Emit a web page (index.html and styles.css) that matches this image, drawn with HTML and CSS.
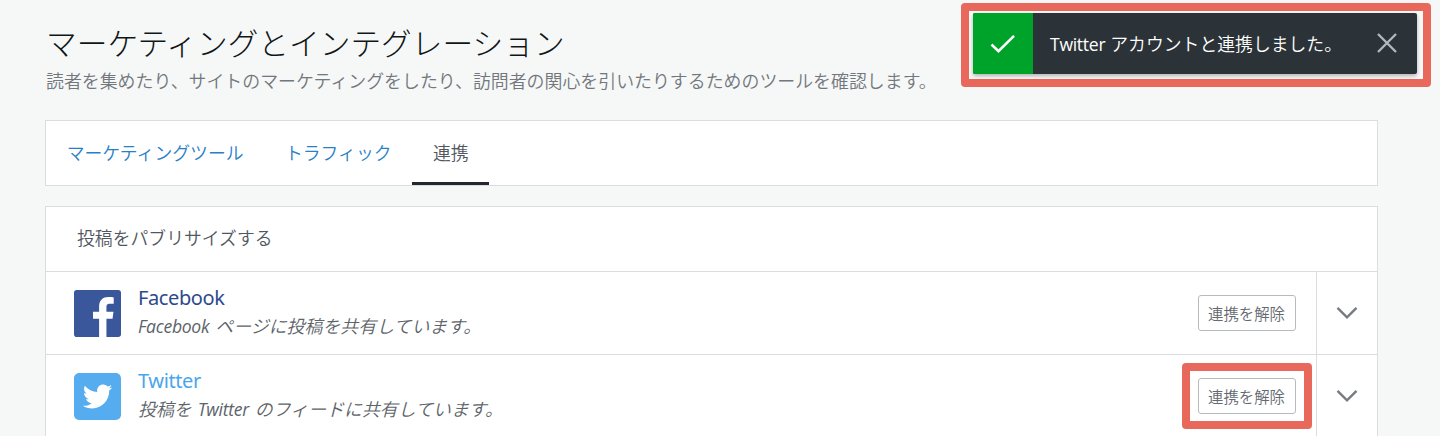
FILE: index.html
```
<!DOCTYPE html>
<html lang="ja">
<head>
  <meta charset="UTF-8" />
  <meta name="viewport" content="width=device-width, initial-scale=1.0"/>
  <title>マーケティングとインテグレーション</title>
  <link rel="stylesheet" href="styles.css">
</head>
<body>

  <main class="content">
    <header class="page-header">
      <h1>マーケティングとインテグレーション</h1>
      <p>読者を集めたり、サイトのマーケティングをしたり、訪問者の関心を引いたりするためのツールを確認します。</p>
    </header>

    <nav class="tabs">
      <a href="#">マーケティングツール</a>
      <a href="#">トラフィック</a>
      <a href="#" class="active">連携</a>
    </nav>

    <section class="services">
      <h2>投稿をパブリサイズする</h2>

      <div class="service">
        <svg class="logo facebook" viewBox="3 3 18 18"><path d="M20.007 3H3.993C3.445 3 3 3.445 3 3.993v16.013c0 .55.445.994.993.994h8.62v-6.97H10.27V11.31h2.346V9.31c0-2.325 1.42-3.59 3.494-3.59.993 0 1.847.073 2.096.106v2.43h-1.438c-1.128 0-1.346.537-1.346 1.324v1.734h2.69l-.35 2.717h-2.34V21h4.587c.548 0 .993-.445.993-.993V3.993c0-.548-.445-.993-.993-.993z"/></svg>
        <div class="info">
          <h3 class="facebook">Facebook</h3>
          <p><span class="latin">Facebook</span> ページに投稿を共有しています。</p>
        </div>
        <div class="action">
          <button type="button">連携を解除</button>
        </div>
        <div class="toggle">
          <svg viewBox="0 0 22 14"><path d="M1.5 1.8 11 11.3l9.5-9.5"/></svg>
        </div>
      </div>

      <div class="service">
        <svg class="logo twitter" viewBox="3 3 18 18"><path d="M19 3H5c-1.105 0-2 .895-2 2v14c0 1.105.895 2 2 2h14c1.105 0 2-.895 2-2V5c0-1.105-.895-2-2-2zm-2.534 6.71c.004.099.007.198.007.298 0 3.045-2.318 6.556-6.556 6.556-1.301 0-2.512-.381-3.532-1.035.18.021.364.032.55.032 1.079 0 2.073-.368 2.862-.986-1.008-.019-1.859-.685-2.152-1.6.141.027.285.041.433.041.21 0 .414-.028.607-.081-1.054-.212-1.848-1.143-1.848-2.259v-.029c.311.173.666.276 1.044.288-.618-.413-1.025-1.118-1.025-1.918 0-.422.114-.818.312-1.158 1.136 1.394 2.834 2.311 4.749 2.407-.039-.169-.06-.344-.06-.525 0-1.272 1.032-2.304 2.304-2.304.663 0 1.261.28 1.682.728.525-.103 1.018-.295 1.463-.559-.172.538-.537.99-1.013 1.275.466-.056.91-.18 1.323-.363-.31.461-.7.867-1.15 1.192z"/></svg>
        <div class="info">
          <h3 class="twitter">Twitter</h3>
          <p>投稿を <span class="latin">Twitter</span> のフィードに共有しています。</p>
        </div>
        <div class="action marked">
          <button type="button">連携を解除</button>
        </div>
        <div class="toggle">
          <svg viewBox="0 0 22 14"><path d="M1.5 1.8 11 11.3l9.5-9.5"/></svg>
        </div>
      </div>
    </section>
  </main>

  <div class="notice-frame">
    <div class="notice">
      <div class="notice-icon">
        <svg viewBox="0 0 26 20"><path d="M1.5 10.5 8.5 17.2 24 1.8"/></svg>
      </div>
      <p><span class="latin">Twitter</span> アカウントと連携しました。</p>
      <svg class="close" viewBox="0 0 20 20"><path d="M1 1l18 18M19 1 1 19"/></svg>
    </div>
  </div>

</body>
</html>
```
FILE: styles.css
```
* {
  box-sizing: border-box;
  margin: 0;
  padding: 0;
}

body {
  font-family: "Noto Sans CJK JP", sans-serif;
  font-size: 17.84px;
  font-weight: 350;
  height: 436px;
  overflow: hidden;
  background-color: #f6f8f7;
  color: #5c6369;
}

.content {
  width: 1333px;
  margin-left: 45px;
  padding-top: 20px;
}

.page-header {
  height: 100px;
  padding-left: 1px;
}

.page-header h1 {
  font-size: 30.7px;
  font-weight: 300;
  line-height: 44px;
  color: #101517;
}

.page-header p {
  font-size: 17.92px;
  line-height: 32px;
  color: #72777d;
}

/* ABAS */
.tabs {
  display: flex;
  height: 66px;
  margin-bottom: 20px;
  background-color: #fff;
  border: 1px solid #dcdcde;
}

.tabs a {
  padding: 0 20.7px;
  line-height: 62px;
  color: #2a80c6;
  text-decoration: none;
}

.tabs a.active {
  color: #50575e;
  border-bottom: 3px solid #23282d;
}

/* SERVIÇOS */
.services {
  background-color: #fff;
  border: 1px solid #dcdcde;
}

.services h2 {
  height: 64px;
  padding-left: 31px;
  font-size: inherit;
  font-weight: 350;
  line-height: 61px;
  color: #50575e;
}

.service {
  display: flex;
  align-items: center;
  height: 83px;
  padding-left: 28px;
  border-top: 1px solid #dcdcde;
}

.logo {
  width: 47px;
  height: 47px;
}

.facebook {
  fill: #39579a;
  color: #2d4a8c;
}

.twitter {
  fill: #55acee;
  color: #4aa6ec;
}

.info {
  flex-grow: 1;
  padding-left: 17px;
}

.info h3 {
  font-family: "Noto Sans", sans-serif;
  font-size: 20px;
  font-weight: 400;
  line-height: 26px;
  letter-spacing: -0.4px;
}

.info p {
  padding-bottom: 1px;
  font-style: italic;
  line-height: 28px;
  word-spacing: 2px;
  letter-spacing: 0.08px;
}

.latin {
  font-family: "Open Sans", sans-serif;
  font-size: 17.6px;
  font-weight: 400;
  letter-spacing: -0.3px;
}

.action {
  padding: 7px 8px;
  margin-right: 4px;
  border: 8px solid transparent;
  border-radius: 4px;
}

.action.marked {
  border-color: #e8685c;
}

.action button {
  display: block;
  width: 98px;
  height: 36px;
  padding-right: 1px;
  font-family: inherit;
  font-size: 15.4px;
  font-weight: 350;
  color: #646970;
  background-color: #fff;
  border: 1px solid #b8bbbe;
  border-radius: 3px;
}

.toggle {
  display: flex;
  align-items: center;
  justify-content: center;
  width: 61px;
  height: 100%;
  border-left: 1px solid #dcdcde;
}

.toggle svg {
  width: 22px;
  height: 14px;
  fill: none;
  stroke: #787c82;
  stroke-width: 2.4;
}

/* AVISO */
.notice-frame {
  position: absolute;
  top: 3px;
  left: 961px;
  width: 470px;
  height: 84px;
  padding: 2px 6px 6px 4px;
  background-color: #fafafa;
  border: 8px solid #e8685c;
  border-radius: 4px;
}

.notice {
  display: flex;
  align-items: center;
  width: 444px;
  height: 61px;
  padding-right: 20px;
  overflow: hidden;
  background-color: #2c3338;
  border-radius: 2px;
  box-shadow: 0 2px 4px rgba(0, 0, 0, 0.3);
}

.notice-icon {
  display: flex;
  align-items: center;
  justify-content: center;
  width: 60px;
  height: 100%;
  background-color: #00a32a;
}

.notice-icon svg {
  width: 26px;
  height: 20px;
  fill: none;
  stroke: #fff;
  stroke-width: 2.6;
}

.notice p {
  flex-grow: 1;
  padding-left: 17px;
  padding-bottom: 1px;
  font-weight: 350;
  color: #fff;
  word-spacing: 1px;
}

.close {
  width: 20px;
  height: 20px;
  margin-bottom: 1px;
  stroke: #b4b9be;
  stroke-width: 2.3;
}
```
